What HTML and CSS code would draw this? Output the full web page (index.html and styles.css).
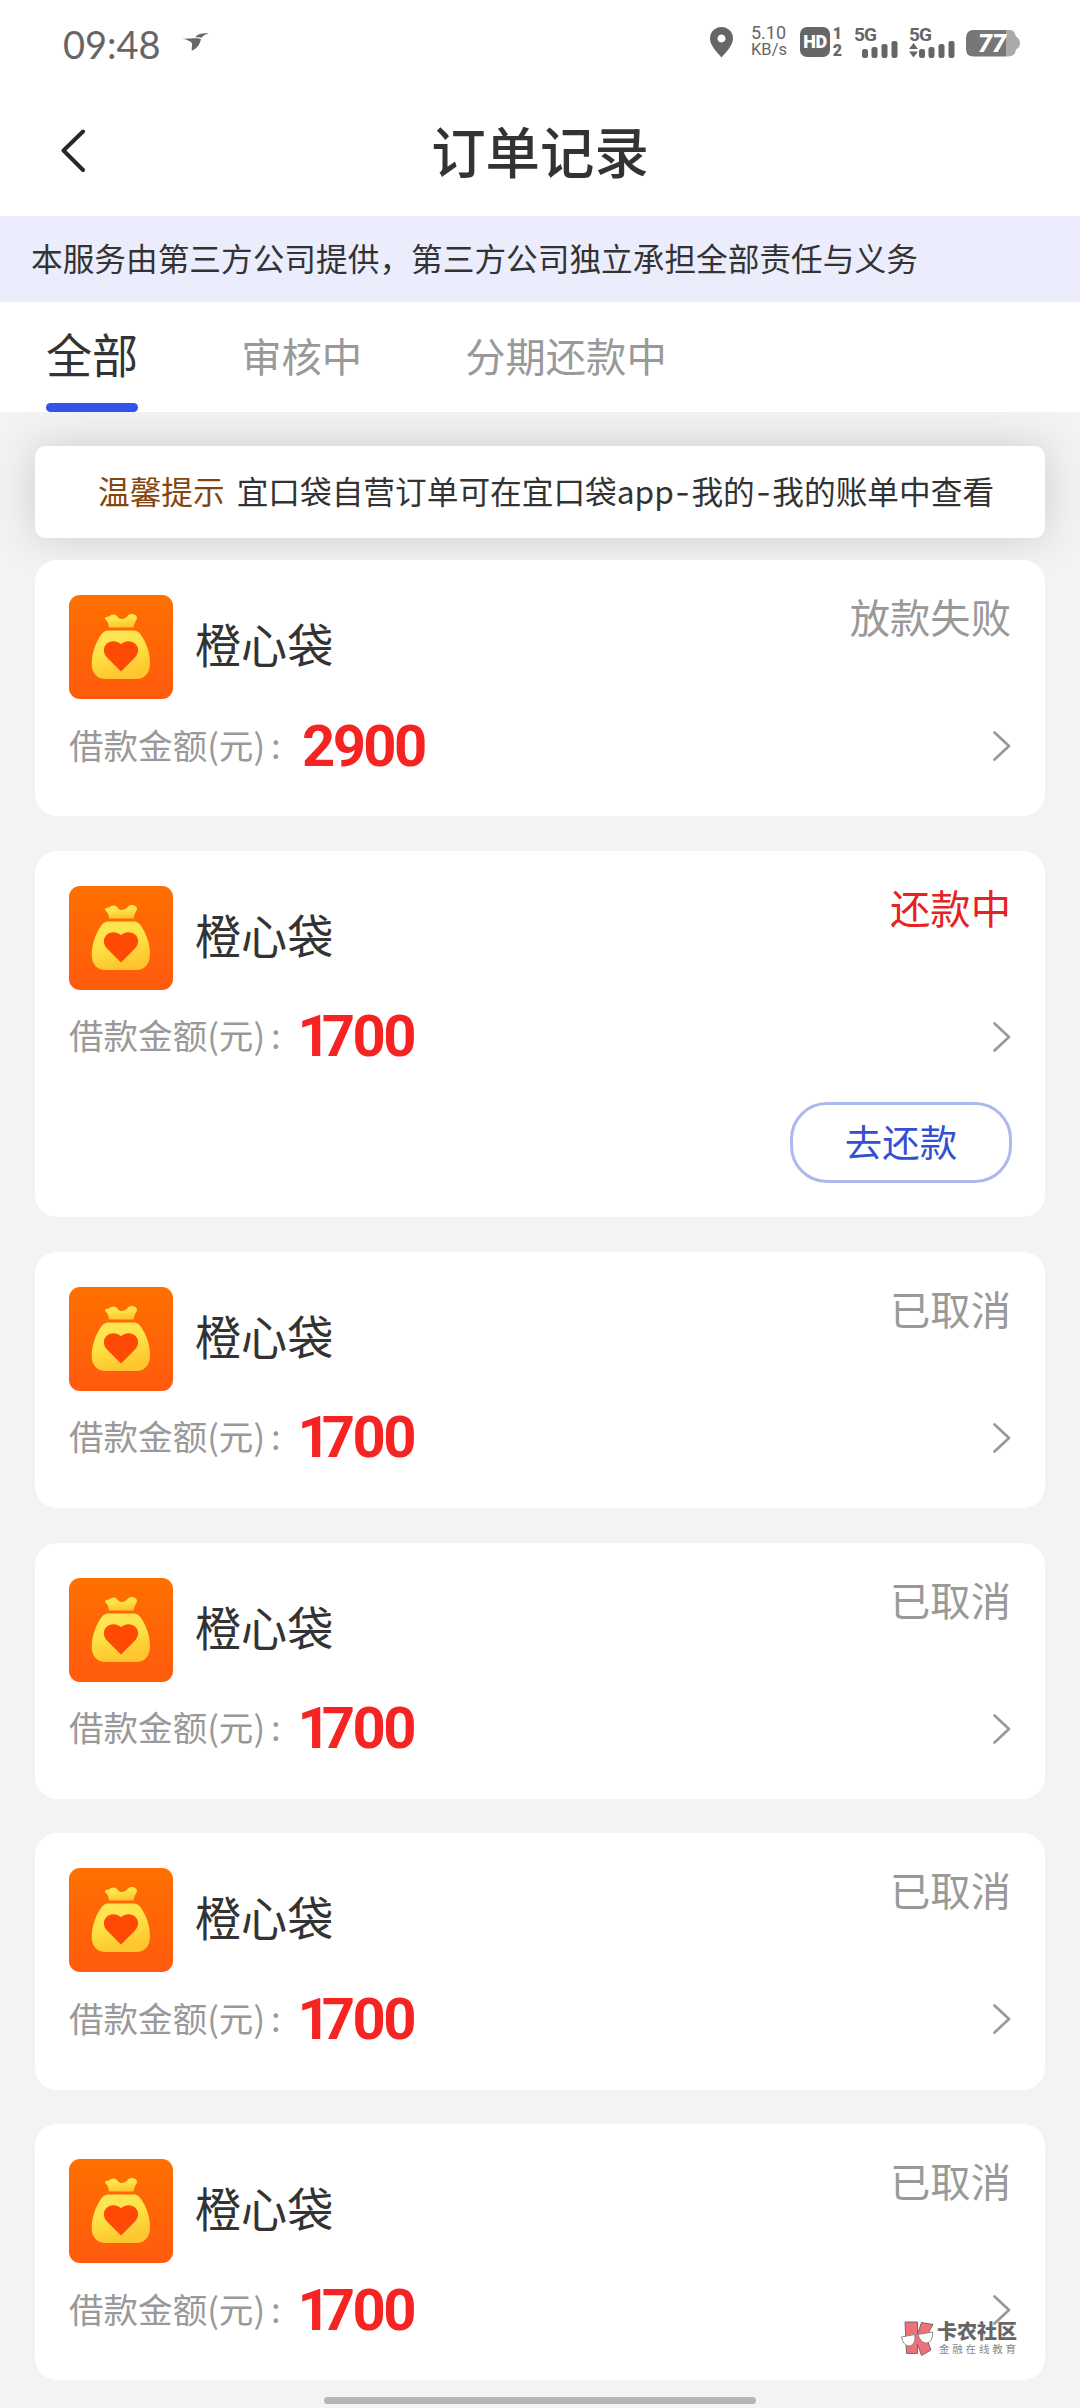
FILE: index.html
```html
<!DOCTYPE html>
<html lang="zh-CN">
<head>
<meta charset="utf-8">
<title>订单记录</title>
<link rel="stylesheet" href="styles.css">
</head>
<body>
<svg class="defs" width="0" height="0" aria-hidden="true">
  <defs>
    <linearGradient id="tile" x1="0" y1="0" x2="0" y2="1"><stop offset="0" stop-color="#ff7000"/><stop offset="1" stop-color="#ff5a0e"/></linearGradient>
    <linearGradient id="gold" x1="0" y1="0" x2="0.3" y2="1"><stop offset="0" stop-color="#ffe75a"/><stop offset="0.5" stop-color="#fde345"/><stop offset="1" stop-color="#ffc52e"/></linearGradient>
    <symbol id="bag" viewBox="0 0 104 104">
      <rect width="104" height="104" rx="11" fill="url(#tile)"/>
      <path fill="url(#gold)" d="M40 32.5 C39.6 28 38.5 26.500 36.500 24.500 C35 22.500 37.500 21.500 40 21.500 C42 19.500 45 18.500 47.500 20.500 C49 22 50 24 52.500 24 C55.500 24 57 22.500 59 20.500 C62 18 67.500 19 68 22.500 C68 25 65.500 26.500 64.500 32.500 Z"/>
      <path fill="url(#gold)" d="M39.500 35.500 H64.500 C68 35.500 70 37 72 40 C77.500 48 81 58 81 68 C81 78 76 84 67 84 H37 C28 84 22.700 78 22.700 69 C22.700 58 27 47 32 40 C34 37 36 35.500 39.500 35.500 Z"/>
      <path fill="#ff4a05" d="M52 76.500 L38.500 63 C34 58.500 33.800 52.500 37.500 49 C41.500 45.200 48 45.500 52 49.300 C56 45.500 62.500 45.200 66.500 49 C70.200 52.500 70 58.500 65.500 63 Z"/>
    </symbol>
    <symbol id="chev" viewBox="0 0 20 32"><path d="M2.500 2.500 L17 16 L2.500 29.500" fill="none" stroke="#999" stroke-width="2.700" stroke-linecap="round" stroke-linejoin="round"/></symbol>
  </defs>
</svg>
<div class="screen">
  <header class="statusbar">
    <span class="clock">09:48</span>
    <svg class="bird" width="27" height="18" viewBox="0 0 27 18"><path fill="#666" d="M0 5.500 C6 6 10 5.200 13 5.300 C16 5.300 18 5.600 19 6 C18 11 15 16 10 17.500 C9.200 16.500 10.300 13 10 10.500 C9 8 4 6.500 0 5.500 Z M13.500 4.300 C15 1.500 18 .5 27 0 C24 1.500 21.500 2 19.500 4.800 C17.500 4.300 15.500 4.200 13.500 4.300 Z"/></svg>
    <div class="indicators">
      <svg class="pin" width="23" height="31" viewBox="0 0 23 31"><path fill="#666" fill-rule="evenodd" d="M11.500 30.500 C8 26 0 19 0 11.500 A11.500 11.500 0 0 1 23 11.500 C23 19 15 26 11.500 30.500 Z M11.500 7.500 a4 4 0 1 0 .01 0 Z"/></svg>
      <div class="speed"><span class="rate">5.10</span><span>KB/s</span></div>
      <div class="hd">HD</div>
      <div class="sims"><span>1</span><span>2</span></div>
      <div class="signal"><span class="net">5G</span><svg width="36" height="17" viewBox="0 0 36 17" fill="#666"><rect x="0" y="8" width="6" height="9" rx="2.200"/><rect x="9.500" y="6" width="6" height="11" rx="2.200"/><rect x="19.500" y="3" width="6" height="14" rx="2.200"/><rect x="29.500" y="0" width="6" height="17" rx="2.200"/></svg></div>
      <div class="signal second"><span class="net">5G</span><svg width="46" height="17" viewBox="-10 0 46 17" fill="#666"><path d="M-5.500 2 L-1 8 H-10 Z M-5.500 16.500 L-1 10.500 H-10 Z"/><rect x="0" y="8" width="6" height="9" rx="2.200"/><rect x="9.500" y="6" width="6" height="11" rx="2.200"/><rect x="19.500" y="3" width="6" height="14" rx="2.200"/><rect x="29.500" y="0" width="6" height="17" rx="2.200"/></svg></div>
      <div class="battery"><span>77</span></div>
    </div>
  </header>
  <nav class="titlebar">
    <svg class="back" width="26" height="44" viewBox="0 0 26 44"><path d="M23 2.500 L3.500 21.500 L23 41" fill="none" stroke="#282828" stroke-width="4" stroke-linecap="round" stroke-linejoin="round"/></svg>
    <h1>订单记录</h1>
  </nav>
  <div class="notice">本服务由第三方公司提供，第三方公司独立承担全部责任与义务</div>
  <div class="tabs">
    <span class="tab active">全部</span>
    <span class="tab">审核中</span>
    <span class="tab">分期还款中</span>
  </div>
  <div class="tip"><b>温馨提示</b><span>宜口袋自营订单可在宜口袋app<i>-</i>我的<i>-</i>我的账单中查看</span></div>
  <main class="orders">
    <section class="card">
      <div class="top"><svg class="logo"><use href="#bag"/></svg><h2>橙心袋</h2><span class="state">放款失败</span></div>
      <div class="row"><span class="label">借款金额(元)</span><span class="colon">:</span><span class="amount">2900</span><svg class="chev"><use href="#chev"/></svg></div>
    </section>
    <section class="card">
      <div class="top"><svg class="logo"><use href="#bag"/></svg><h2>橙心袋</h2><span class="state due">还款中</span></div>
      <div class="row"><span class="label">借款金额(元)</span><span class="colon">:</span><span class="amount"><em>1</em>700</span><svg class="chev"><use href="#chev"/></svg></div>
      <button class="repay">去还款</button>
    </section>
    <section class="card">
      <div class="top"><svg class="logo"><use href="#bag"/></svg><h2>橙心袋</h2><span class="state">已取消</span></div>
      <div class="row"><span class="label">借款金额(元)</span><span class="colon">:</span><span class="amount"><em>1</em>700</span><svg class="chev"><use href="#chev"/></svg></div>
    </section>
    <section class="card">
      <div class="top"><svg class="logo"><use href="#bag"/></svg><h2>橙心袋</h2><span class="state">已取消</span></div>
      <div class="row"><span class="label">借款金额(元)</span><span class="colon">:</span><span class="amount"><em>1</em>700</span><svg class="chev"><use href="#chev"/></svg></div>
    </section>
    <section class="card">
      <div class="top"><svg class="logo"><use href="#bag"/></svg><h2>橙心袋</h2><span class="state">已取消</span></div>
      <div class="row"><span class="label">借款金额(元)</span><span class="colon">:</span><span class="amount"><em>1</em>700</span><svg class="chev"><use href="#chev"/></svg></div>
    </section>
    <section class="card">
      <div class="top"><svg class="logo"><use href="#bag"/></svg><h2>橙心袋</h2><span class="state">已取消</span></div>
      <div class="row"><span class="label">借款金额(元)</span><span class="colon">:</span><span class="amount"><em>1</em>700</span><svg class="chev"><use href="#chev"/></svg></div>
    </section>
  </main>
  <div class="homebar"></div>
  <div class="stamp">
    <svg width="35" height="36" viewBox="0 0 35 36"><g fill="#f0707a" stroke="#77666a" stroke-width="1"><path d="M5 1 H17.500 V13 L21.500 1.500 L33 3.500 L26 16 L31 29 L21.500 34.500 L17.500 23 V32.500 H6.500 Z"/></g><g fill="#fff" stroke="#888" stroke-width="1"><path d="M1.500 16 L14.500 13.500 C16 18 14 24.500 9.500 25 C5 25 2.500 21 1.500 16 Z"/><path d="M18 13.500 L32.500 11 C33 17 31 21.500 26.500 22 C22 22 19.500 18 18 13.500 Z"/></g></svg>
    <div><strong>卡农社区</strong><small>金融在线教育</small></div>
  </div>
</div>
</body>
</html>
```
FILE: styles.css
```css
* { box-sizing: border-box; margin: 0; padding: 0; }
body { font-family: "Noto Sans CJK SC", sans-serif; color: #333; background: #f3f3f3; }
.defs { position: absolute; }
.screen { position: relative; width: 1080px; height: 2408px; overflow: hidden; background: #f3f3f3; }
.statusbar, .titlebar { background: #fff; display: flex; }
.statusbar { height: 88px; padding: 0 60px 0 63px; align-items: center; color: #666; }
.clock { font: 400 38px/50px Lato, sans-serif; width: 99px; margin-top: -1px; white-space: nowrap; }
.bird { margin: -4px 0 0 20px; }
.indicators { margin-left: auto; display: flex; align-items: center; margin-top: -4px; }
.pin { margin-right: 18px; }
.speed { display: flex; flex-direction: column; font: 400 16.500px/18px Roboto, sans-serif; width: 36px; margin-right: 13px; white-space: nowrap; }
.rate { font-size: 18px; line-height: 16px; }
.hd { width: 30px; height: 30px; border-radius: 7px; background: #666; color: #fff; font: 900 18px/30px Roboto, sans-serif; letter-spacing: -.5px; text-align: center; }
.sims { width: 13px; display: flex; flex-direction: column; font: 900 16px/17px Roboto, sans-serif; text-align: center; margin-left: 1px; }
.signal { position: relative; width: 44px; height: 31px; margin-left: 10px; display: flex; align-items: flex-end; justify-content: flex-end; }
.signal.second { width: 46px; margin-left: 11px; }
.net { position: absolute; left: 0; top: -1px; font: 700 19px/17px Roboto, sans-serif; letter-spacing: -.8px; }
.battery { width: 54px; height: 27px; margin: 2px 0 0 11px; display: flex; align-items: center; border-radius: 7px; background: linear-gradient(90deg, #777 40px, #aaa 40px); clip-path: path("M7 0 H42 Q49 0 50 7 Q54 9 54 13.500 Q54 18 50 20 Q49 27 42 27 H7 Q0 27 0 20 V7 Q0 0 7 0 Z"); }
.battery span { width: 52px; text-align: center; font: italic 900 25px/27px Roboto, sans-serif; color: #fff; }
.titlebar { height: 128px; padding: 0 60px; align-items: center; }
.back { margin-top: -2px; }
.titlebar h1 { flex: 1; text-align: center; margin: -5px 26px 0 0; font-size: 54.4px; line-height: 80px; font-weight: 500; }
.notice { height: 86px; padding-left: 31px; background: #ebedfd; font-size: 31.68px; line-height: 83px; white-space: nowrap; }
.tabs { position: relative; z-index: 1; height: 110px; padding-left: 46px; display: flex; gap: 103px; background: #fff; }
.tab { font-size: 40.32px; line-height: 106px; color: #999; white-space: nowrap; }
.tab.active { height: 110px; font-size: 46.08px; line-height: 102px; color: #333; display: flex; flex-direction: column; }
.tab.active::after { content: ""; height: 9px; margin-top: -1px; flex: none; border-radius: 5px; background: #3153ea; }
.tip { height: 92px; margin: 34px 35px 22px; display: flex; gap: 12px; justify-content: flex-start; padding-left: 63px; border-radius: 11px; background: #fff; box-shadow: 0 0 44px rgba(0,0,0,.16); font-size: 31.68px; line-height: 88px; white-space: nowrap; }
.tip b { font-weight: 400; color: #84460d; }
.tip i { font-style: normal; font-family: Inter, sans-serif; letter-spacing: 1.500px; margin-left: 1.500px; }
.orders { position: relative; display: flex; flex-direction: column; gap: 34.500px; padding: 0 35px; }
.card { min-height: 256.300px; padding: 35px 34px 0; border-radius: 22px; background: #fff; display: flex; flex-direction: column; }
.card:nth-child(2) { height: 366.500px; }
.top { height: 104px; display: flex; }
.logo { width: 104px; height: 104px; flex: none; }
.top h2 { margin-left: 22px; font-size: 46.08px; line-height: 97px; font-weight: 400; }
.state { margin-left: auto; font-size: 40.32px; line-height: 42px; color: #999; }
.due { color: #e62222; }
.row { height: 92px; display: flex; align-items: center; font-size: 34.560px; color: #999; white-space: nowrap; }
.label { width: 198px; margin-top: -3px; }
.colon { width: 35px; padding-left: 4px; margin-top: -3px; }
.amount { font: 700 58px/60px Roboto, sans-serif; margin-top: 1px; letter-spacing: -2.600px; color: #f62323; }
.amount em { font-style: normal; letter-spacing: -9px; margin-left: -4.500px; }
.chev { width: 20px; height: 32px; margin: 2px -1px 0 auto; }
.repay { align-self: flex-end; width: 222px; height: 81px; margin: 20px -1px 0 0; padding-bottom: 3px; border: 3px solid #adb9ee; border-radius: 37px; background: #fff; color: #3450d2; font: 400 37.440px/70px "Noto Sans CJK SC", sans-serif; }
.homebar { width: 432px; height: 7px; margin: 17px auto 0; border-radius: 4px; background: #b5b5b5; }
.stamp { position: absolute; left: 900px; top: 2321px; display: flex; gap: 2px; }
.stamp div { display: flex; flex-direction: column; color: #666; white-space: nowrap; }
.stamp strong { font-size: 20px; line-height: 20px; font-weight: 900; }
.stamp small { font-size: 10.500px; line-height: 16px; letter-spacing: 2.800px; padding-left: 2px; color: #888; }
```
